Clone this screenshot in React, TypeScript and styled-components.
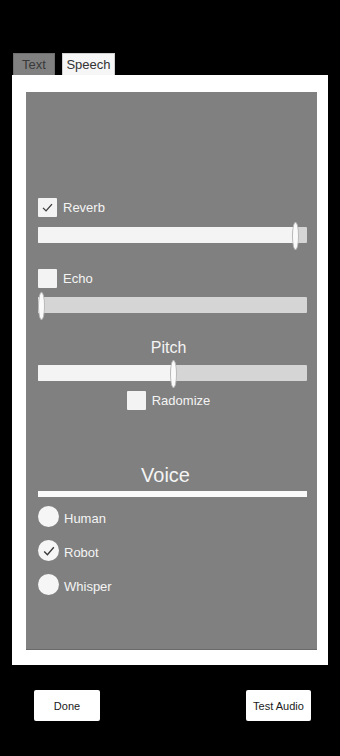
import React from 'react'
import styled, { createGlobalStyle } from 'styled-components'

const GlobalStyle = createGlobalStyle`
  html, body {
    margin: 0;
    padding: 0;
    background: #000;
    font-family: 'Liberation Sans', Arial, sans-serif;
  }
`

const Screen = styled.div`
  width: 340px;
  height: 756px;
  background: #000;
  display: flex;
  flex-direction: column;
  box-sizing: border-box;
  padding-top: 53px;
`
const TabBar = styled.div`
  display: flex;
  gap: 7px;
  padding-left: 13px;
  height: 22px;
`
const Tab = styled.div<{ active?: boolean }>`
  height: 22px;
  padding: 0 6px;
  box-sizing: border-box;
  display: flex;
  align-items: center;
  justify-content: center;
  font-size: 13px;
  color: ${({ active }) => (active ? '#3a3a3a' : '#333')};
  background: ${({ active }) => (active ? '#808080' : '#f6f6f6')};
  border: 1px solid ${({ active }) => (active ? '#6e6e6e' : '#d0d0d0')};
  border-bottom: none;
  width: ${({ active }) => (active ? '42px' : '53px')};
`
const Panel = styled.div`
  margin-left: 12px;
  width: 316px;
  height: 590px;
  background: #fff;
  box-sizing: border-box;
  padding: 17px 11px 15px 14px;
  display: flex;
`
const Inner = styled.div`
  flex: 1;
  background: #808080;
  border-bottom: 1px solid #6a6a6a;
  box-sizing: border-box;
  padding: 106px 10px 0 12px;
  display: flex;
  flex-direction: column;
`
const CheckRow = styled.div<{ center?: boolean }>`
  display: flex;
  align-items: center;
  gap: 6px;
  height: 19px;
  justify-content: ${({ center }) => (center ? 'center' : 'flex-start')};
  padding-right: ${({ center }) => (center ? '8px' : '0')};
`
const Box = styled.div`
  width: 19px;
  height: 19px;
  background: #f3f3f3;
  border-radius: 1px;
  display: flex;
  align-items: center;
  justify-content: center;
`
const Label = styled.span`
  color: #f4f4f4;
  font-size: 13px;
`
const Track = styled.div<{ gapTop: number }>`
  position: relative;
  margin-top: ${({ gapTop }) => gapTop}px;
  height: 16px;
  background: #d5d5d5;
  border-radius: 1px;
`
const Fill = styled.div`
  height: 100%;
  background: #f4f4f4;
  border-radius: 1px;
`
const Thumb = styled.div`
  position: absolute;
  top: -5px;
  width: 5px;
  height: 26px;
  margin-left: -3px;
  background: #fafafa;
  border: 1px solid #b8b8b8;
  border-radius: 50%;
`
const Spacer = styled.div<{ h: number }>`
  height: ${({ h }) => h}px;
  flex-shrink: 0;
`
const Heading = styled.div<{ size: number; shift: number }>`
  color: #f4f4f4;
  text-align: center;
  font-size: ${({ size }) => size}px;
  line-height: 1;
  padding-right: ${({ shift }) => shift}px;
`
const Rule = styled.div`
  height: 6px;
  background: #fafafa;
  margin-top: 6px;
`
const RadioList = styled.div`
  display: flex;
  flex-direction: column;
  gap: 13px;
  margin-top: 9px;
`
const RadioRow = styled.div`
  display: flex;
  align-items: center;
  gap: 5px;
  height: 21px;
`
const RadioLabel = styled(Label)`
  padding-top: 3px;
`
const Circle = styled.div`
  width: 21px;
  height: 21px;
  border-radius: 50%;
  background: #f6f6f6;
  display: flex;
  align-items: center;
  justify-content: center;
`
const Footer = styled.div`
  display: flex;
  justify-content: space-between;
  padding: 25px 29px 0 34px;
`
const Button = styled.div<{ w: number }>`
  width: ${({ w }) => w}px;
  height: 31px;
  background: #fff;
  border-radius: 2px;
  display: flex;
  align-items: center;
  justify-content: center;
  font-size: 11px;
  color: #1a1a1a;
`

const Check = ({ size = 13 }: { size?: number }) => (
  <svg width={size} height={size} viewBox="0 0 16 16">
    <path d="M2.5 8.5 L6.2 12.2 L13.5 3.8" fill="none" stroke="#3a3a3a" strokeWidth="1.6" />
  </svg>
)

function Slider({ value, gapTop }: { value: number; gapTop: number }) {
  return (
    <Track gapTop={gapTop}>
      <Fill style={{ width: `${value}%` }} />
      <Thumb style={{ left: `${value}%` }} />
    </Track>
  )
}

export default function App() {
  return (
    <>
      <GlobalStyle />
      <Screen>
        <TabBar>
          <Tab active>Text</Tab>
          <Tab>Speech</Tab>
        </TabBar>
        <Panel>
          <Inner>
            <CheckRow>
              <Box>
                <Check />
              </Box>
              <Label>Reverb</Label>
            </CheckRow>
            <Slider value={95.5} gapTop={10} />
            <Spacer h={26} />
            <CheckRow>
              <Box />
              <Label>Echo</Label>
            </CheckRow>
            <Slider value={1} gapTop={9} />
            <Spacer h={27} />
            <Heading size={16} shift={8}>Pitch</Heading>
            <Slider value={50} gapTop={9} />
            <Spacer h={10} />
            <CheckRow center>
              <Box />
              <Label>Radomize</Label>
            </CheckRow>
            <Spacer h={55} />
            <Heading size={20} shift={14}>Voice</Heading>
            <Rule />
            <RadioList>
              <RadioRow>
                <Circle />
                <RadioLabel>Human</RadioLabel>
              </RadioRow>
              <RadioRow>
                <Circle>
                  <Check size={14} />
                </Circle>
                <RadioLabel>Robot</RadioLabel>
              </RadioRow>
              <RadioRow>
                <Circle />
                <RadioLabel>Whisper</RadioLabel>
              </RadioRow>
            </RadioList>
          </Inner>
        </Panel>
        <Footer>
          <Button w={66}>Done</Button>
          <Button w={65}>Test Audio</Button>
        </Footer>
      </Screen>
    </>
  )
}
